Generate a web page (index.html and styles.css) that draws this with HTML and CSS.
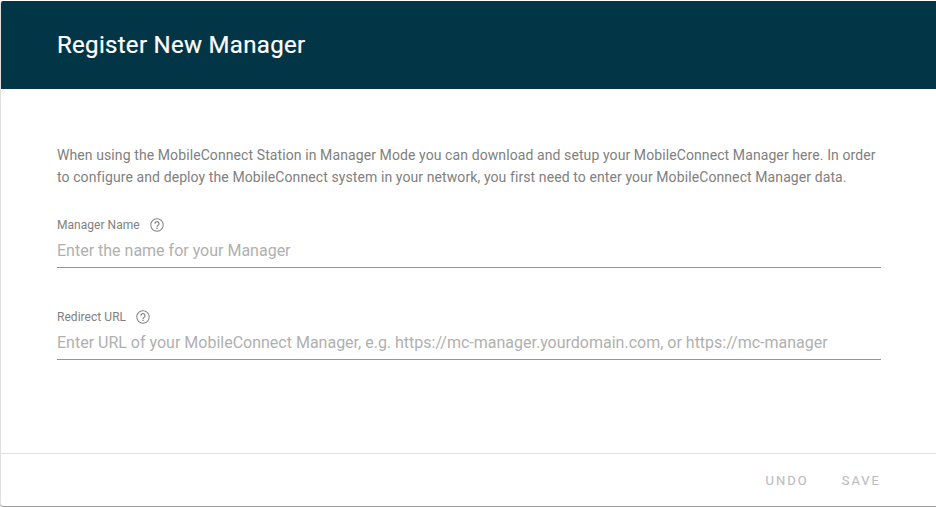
FILE: index.html
```html
<!DOCTYPE html>
<html lang="en">
<head>
<meta charset="utf-8">
<title>Register New Manager</title>
<link rel="stylesheet" href="styles.css">
</head>
<body>
<main class="card">
  <header class="card-header"><h1 class="title">Register New Manager</h1></header>
  <section class="card-body">
    <p class="intro">When using the MobileConnect Station in Manager Mode you can download and setup your MobileConnect Manager here. In order to configure and deploy the MobileConnect system in your network, you first need to enter your MobileConnect Manager data.</p>
    <div class="field">
      <div class="label-row">
        <label class="label" for="name">Manager Name</label>
        <svg class="help" viewBox="0 0 24 24" width="16" height="16" aria-hidden="true"><path d="M11 18h2v-2h-2v2zm1-16C6.48 2 2 6.48 2 12s4.48 10 10 10 10-4.48 10-10S17.52 2 12 2zm0 18.500c-4.690 0-8.500-3.810-8.500-8.500S7.310 3.500 12 3.500s8.500 3.810 8.500 8.500-3.810 8.500-8.500 8.500zM12 6c-2.210 0-4 1.790-4 4h1.700c0-1.270 1.030-2.300 2.300-2.300s2.300 1.030 2.300 2.300c0 2-3.150 1.900-3.150 5h1.700c0-2.250 3.150-2.500 3.150-5 0-2.210-1.790-4-4-4z"/></svg>
      </div>
      <input class="input" id="name" type="text" placeholder="Enter the name for your Manager">
    </div>
    <div class="field">
      <div class="label-row">
        <label class="label" for="url">Redirect URL</label>
        <svg class="help" viewBox="0 0 24 24" width="16" height="16" aria-hidden="true"><path d="M11 18h2v-2h-2v2zm1-16C6.48 2 2 6.48 2 12s4.48 10 10 10 10-4.48 10-10S17.52 2 12 2zm0 18.500c-4.690 0-8.500-3.810-8.500-8.500S7.310 3.500 12 3.500s8.500 3.810 8.500 8.500-3.810 8.500-8.500 8.500zM12 6c-2.210 0-4 1.790-4 4h1.700c0-1.270 1.030-2.300 2.300-2.300s2.300 1.030 2.300 2.300c0 2-3.150 1.900-3.150 5h1.700c0-2.250 3.150-2.500 3.150-5 0-2.210-1.790-4-4-4z"/></svg>
      </div>
      <input class="input" id="url" type="text" placeholder="Enter URL of your MobileConnect Manager, e.g. https://mc-manager.yourdomain.com, or https://mc-manager">
    </div>
  </section>
  <footer class="card-footer">
    <button class="action" type="button" disabled>UNDO</button>
    <button class="action" type="button" disabled>SAVE</button>
  </footer>
</main>
</body>
</html>
```

FILE: styles.css
```css
* { box-sizing: border-box; }
html, body { margin: 0; height: 100%; background: #fff; overflow: hidden; }
body { font-family: Roboto, sans-serif; }
.card {
  display: flex;
  flex-direction: column;
  width: 936px;
  height: 505px;
  margin-top: 1px;
  background: #fff;
  border-left: 1px solid #e0e0e0;
  border-radius: 3px 0 0 3px;
  box-shadow: 0 1px 0 #9e9e9e;
  overflow: hidden;
}
.card-header {
  flex: none;
  height: 88px;
  display: flex;
  align-items: center;
  padding-left: 56px;
  background: #023646;
}
.title { margin: 0; font-size: 24px; font-weight: 400; letter-spacing: 0.3px; color: #fff; -webkit-text-stroke: 0.2px #fff; }
.card-body { flex: 1; padding: 55px 55px 0 56px; }
.intro { margin: 0 0 29px; font-size: 14px; line-height: 22px; letter-spacing: 0.095px; color: #808080; }
.field { margin-bottom: 41px; }
.label-row { display: flex; align-items: center; gap: 9px; height: 16px; }
.label { font-size: 12px; letter-spacing: 0.04px; color: #808080; }
.help { fill: #808080; }
.input {
  display: block;
  width: 100%;
  height: 35px;
  padding: 0;
  border: 0;
  border-bottom: 1px solid #949494;
  outline: 0;
  font: 16px Roboto, sans-serif;
  background: transparent;
}
.input::placeholder { color: #b0b0b0; opacity: 1; }
.card-footer {
  flex: none;
  height: 53px;
  display: flex;
  justify-content: flex-end;
  align-items: center;
  gap: 33px;
  padding-right: 55px;
  border-top: 1px solid #e0e0e0;
}
.action {
  padding: 0;
  border: 0;
  background: none;
  font: 400 13px Roboto, sans-serif;
  letter-spacing: 2px;
  color: #bdbdbd;
  -webkit-text-stroke: 0.15px #bdbdbd;
}
```
